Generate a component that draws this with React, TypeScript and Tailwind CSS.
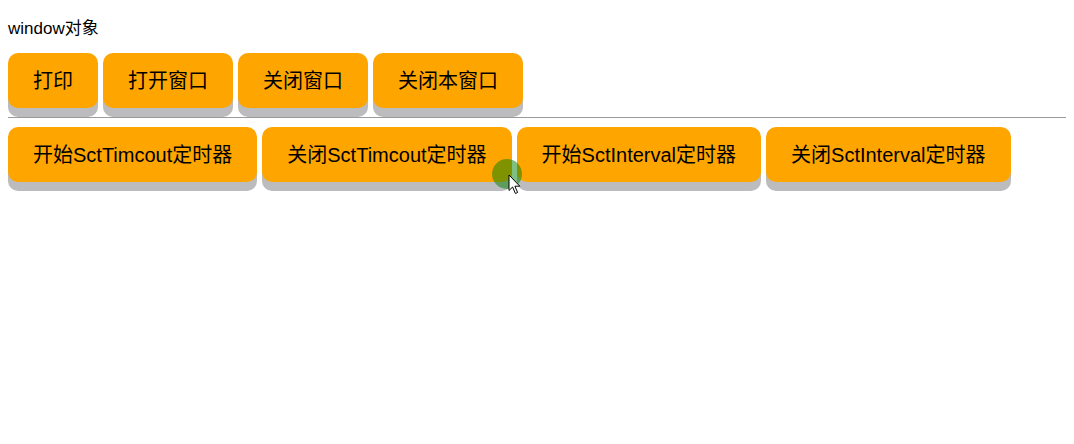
const ROW1 = ["打印", "打开窗口", "关闭窗口", "关闭本窗口"];
const ROW2 = ["开始SctTimcout定时器", "关闭SctTimcout定时器", "开始SctInterval定时器", "关闭SctInterval定时器"];

function Btn({ label }: { label: string }) {
  return (
    <button className="shrink-0 rounded-[10px] bg-[#ffa500] px-[25px] pt-[16px] pb-[14px] text-[20px] leading-[25px] text-black shadow-[0_9px_0_#bcbbbd] whitespace-nowrap">
      {label}
    </button>
  );
}

export default function App() {
  return (
    <div
      className="relative min-h-[444px] bg-white px-2 pt-[19px] text-black"
      style={{ fontFamily: '"Liberation Sans", Arial, "Noto Sans CJK SC", sans-serif' }}
    >
      <div className="text-[17px] leading-[20px]">window对象</div>
      <div className="mt-[14px] flex gap-[5px]">
        {ROW1.map((t) => (
          <Btn key={t} label={t} />
        ))}
      </div>
      <hr className="mt-[9px] mb-[9px] border-0 border-t border-[#9a9a9a]" />
      <div className="flex gap-[5px]">
        {ROW2.map((t) => (
          <Btn key={t} label={t} />
        ))}
      </div>

      {/* click indicator + pointer */}
      <div className="pointer-events-none absolute left-[492px] top-[159px] h-[30px] w-[30px] rounded-full bg-[rgba(0,128,0,0.5)]" />
      <svg
        className="pointer-events-none absolute left-[508px] top-[174px]"
        width="14"
        height="21"
        viewBox="0 0 14 21"
      >
        <path
          d="M1 1 L1 16.5 L4.6 13 L7.4 19.5 L9.6 18.5 L6.9 12.2 L11.8 12.2 Z"
          fill="#fff"
          stroke="#000"
          strokeWidth="1"
          strokeLinejoin="miter"
        />
      </svg>
    </div>
  );
}
